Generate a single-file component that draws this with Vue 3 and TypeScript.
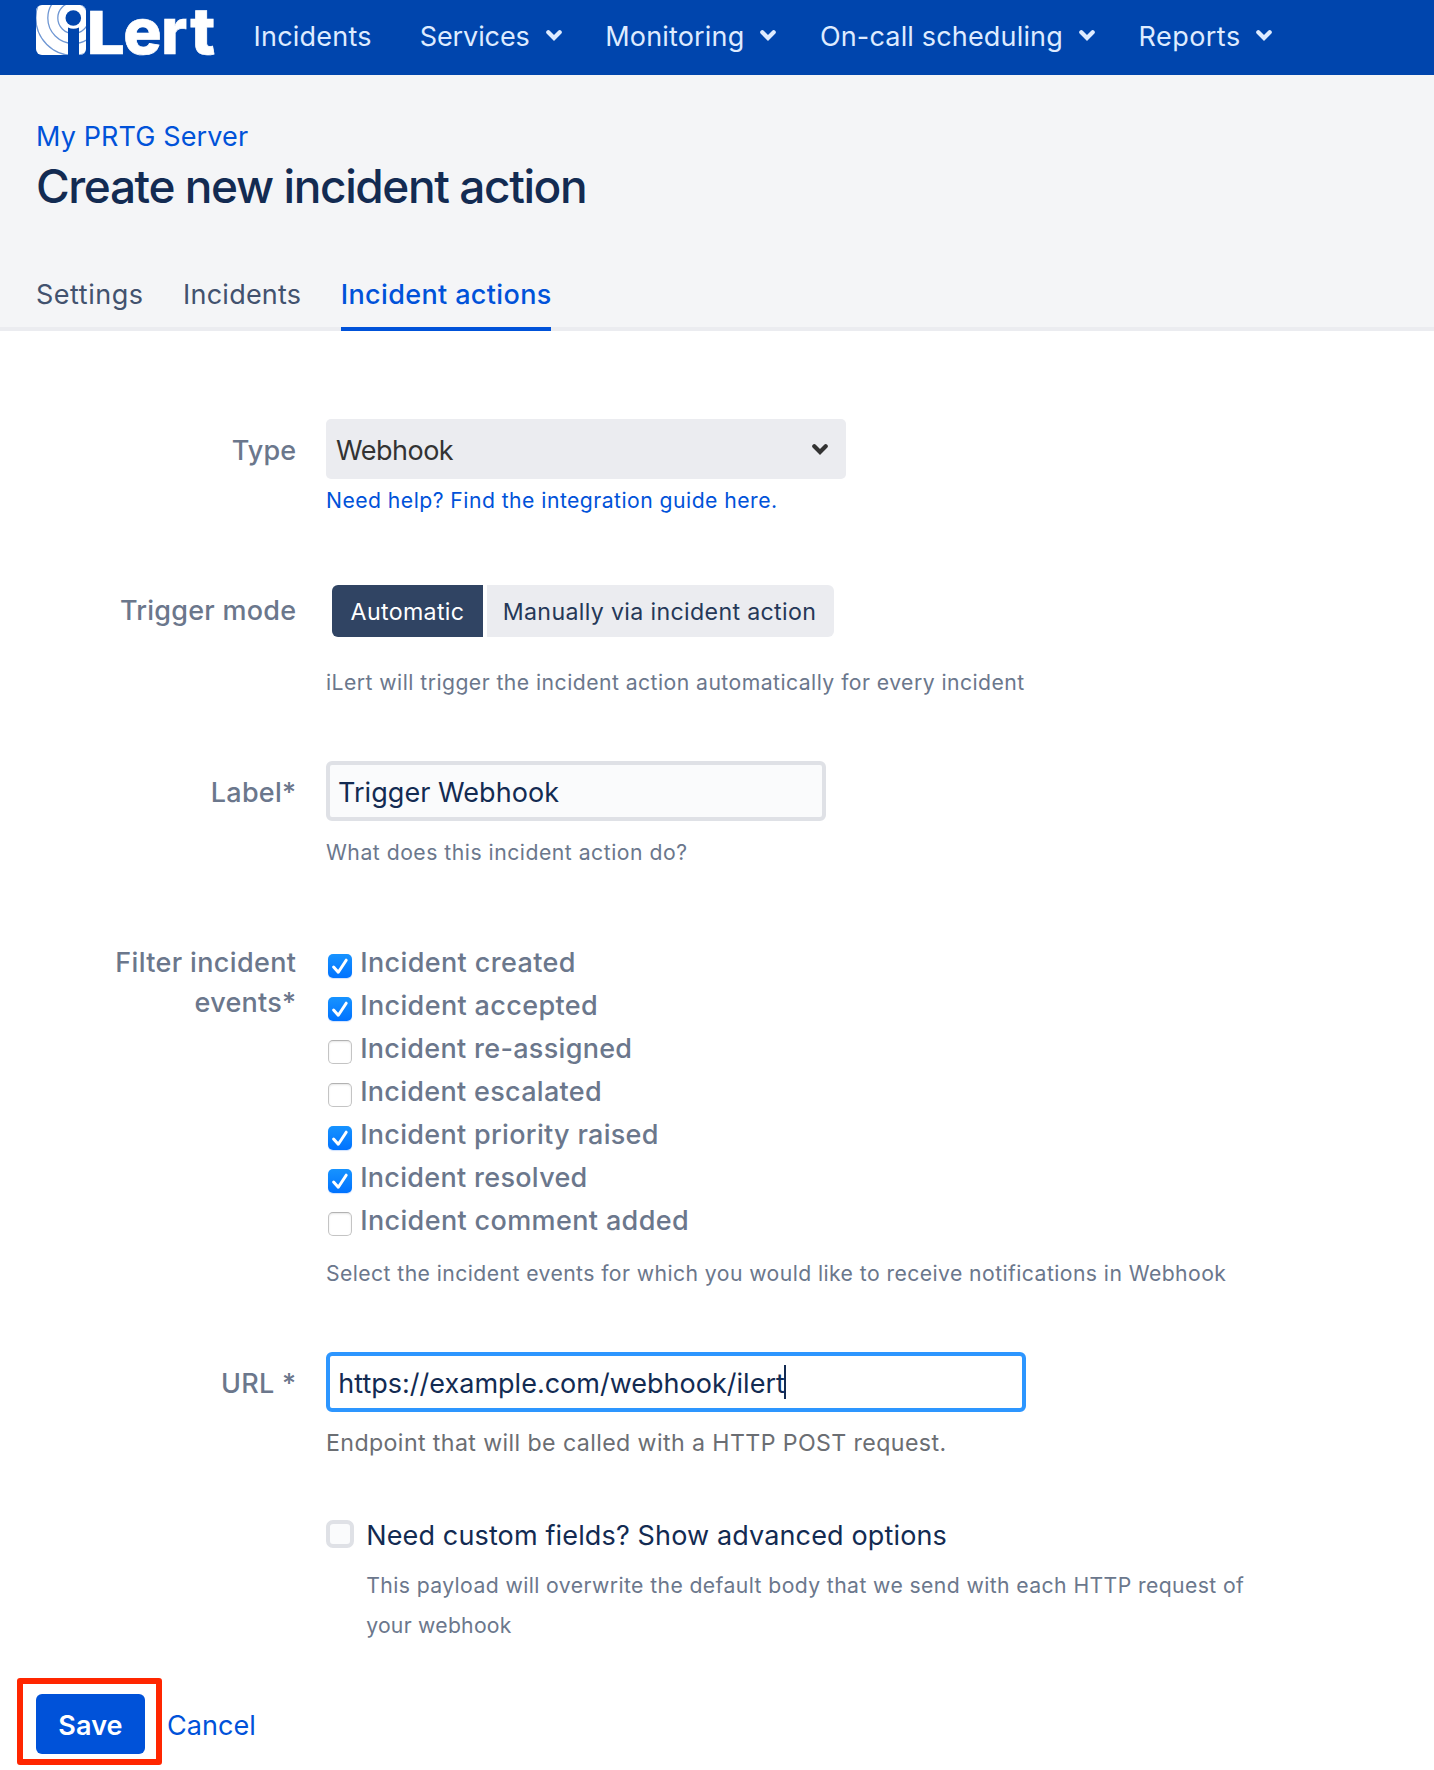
<script setup lang="ts">
import { ref } from 'vue'

interface NavItem { label: string; menu: boolean; cls: string }
interface EventOption { label: string; checked: boolean; cls: string }

const nav: NavItem[] = [
  { label: 'Incidents', menu: false, cls: 'n-incidents' },
  { label: 'Services', menu: true, cls: 'n-services' },
  { label: 'Monitoring', menu: true, cls: 'n-monitoring' },
  { label: 'On-call scheduling', menu: true, cls: 'n-oncall' },
  { label: 'Reports', menu: true, cls: 'n-reports' },
]

const label = ref('Trigger Webhook')
const url = ref('https://example.com/webhook/ilert')
const mode = ref<'auto' | 'manual'>('auto')

const events = ref<EventOption[]>([
  { label: 'Incident created', checked: true, cls: 'e-wide' },
  { label: 'Incident accepted', checked: true, cls: 'e-mid' },
  { label: 'Incident re-assigned', checked: false, cls: '' },
  { label: 'Incident escalated', checked: false, cls: '' },
  { label: 'Incident priority raised', checked: true, cls: '' },
  { label: 'Incident resolved', checked: true, cls: '' },
  { label: 'Incident comment added', checked: false, cls: 'e-mid' },
])
</script>

<template>
  <div class="page">
    <nav class="topbar">
      <svg class="logo" width="180" height="60" viewBox="0 0 180 60" aria-label="iLert">
        <defs>
          <clipPath id="mark"><rect x="0" y="5" width="50" height="50" rx="6" /></clipPath>
        </defs>
        <g clip-path="url(#mark)">
          <rect x="0" y="5" width="50" height="50" fill="#fff" />
          <g fill="none" stroke="#6f97d3" stroke-width="1.3">
            <circle cx="37.3" cy="18" r="15.5" />
            <circle cx="37.3" cy="18" r="25.5" />
            <circle cx="37.3" cy="18" r="37.5" />
          </g>
          <circle cx="37.3" cy="18" r="9.6" fill="#fff" />
          <circle cx="37.3" cy="18" r="7.8" fill="#0045ad" />
          <path d="M32 27.6Q37.500 30 43 27.600V55H32Z" fill="#0045ad" />
        </g>
        <g class="wordmark" fill="#fff" stroke="#fff" stroke-width="0.7">
          <text font-size="59" transform="translate(50.700 54) scale(1.14 1)">L</text>
          <text font-size="64" x="87.3" y="54">e</text>
          <text font-size="64" transform="translate(125.300 54) scale(.96 1)">r</text>
          <text font-size="64" transform="translate(154.300 54) scale(1.020 1)">t</text>
        </g>
      </svg>
      <a v-for="item in nav" :key="item.label" class="nav-item" :class="item.cls">
        <span>{{ item.label }}</span>
        <svg v-if="item.menu" class="chev" width="16" height="11" viewBox="0 0 16 11">
          <path d="M2.300 2.300L8 8L13.700 2.300" />
        </svg>
      </a>
    </nav>

    <header class="head">
      <a class="crumb">My PRTG Server</a>
      <h1>Create new incident action</h1>
      <div class="tabs">
        <a class="tab t-settings">Settings</a>
        <a class="tab t-incidents">Incidents</a>
        <a class="tab active">Incident actions</a>
      </div>
    </header>

    <main class="form">
      <div class="row r-type">
        <div class="name">Type</div>
        <div>
          <div class="select">
            <span>Webhook</span>
            <svg class="chev" width="16" height="11" viewBox="0 0 16 11"><path d="M2.300 2.300L8 8L13.700 2.300" /></svg>
          </div>
          <a class="help">Need help? Find the integration guide here.</a>
        </div>
      </div>

      <div class="row r-mode">
        <div class="name">Trigger mode</div>
        <div>
          <div class="toggle">
            <button class="auto" :class="{ on: mode === 'auto' }" @click="mode = 'auto'">Automatic</button>
            <button class="manual" :class="{ on: mode === 'manual' }" @click="mode = 'manual'">Manually via incident action</button>
          </div>
          <p class="hint">iLert will trigger the incident action automatically for every incident</p>
        </div>
      </div>

      <div class="row r-label">
        <div class="name">Label*</div>
        <div>
          <input v-model="label" class="field" type="text" />
          <p class="hint">What does this incident action do?</p>
        </div>
      </div>

      <div class="row r-events">
        <div class="name"><span class="filter">Filter incident</span> events*</div>
        <div>
          <label v-for="ev in events" :key="ev.label" class="event" :class="ev.cls">
            <span class="box" :class="{ checked: ev.checked }">
              <svg v-if="ev.checked" width="24" height="24" viewBox="0 0 24 24"><path d="M5.600 13L10.300 18.200L18.200 6.200" /></svg>
            </span>
            <span>{{ ev.label }}</span>
          </label>
          <p class="hint">Select the incident events for which you would like to receive notifications in Webhook</p>
        </div>
      </div>

      <div class="row r-url">
        <div class="name">URL *</div>
        <div>
          <div class="field focused"><span>{{ url }}</span><i class="caret"></i></div>
          <p class="hint">Endpoint that will be called with a HTTP POST request.</p>
        </div>
      </div>

      <div class="row r-adv">
        <div></div>
        <div class="advanced">
          <span class="bigbox"></span>
          <div>
            <div class="adv-title">Need custom fields? Show advanced options</div>
            <p class="hint">This payload will overwrite the default body that we send with each HTTP request of <span class="tail">your webhook</span></p>
          </div>
        </div>
      </div>
    </main>

    <footer class="actions">
      <button class="save">Save<span class="marker"></span></button>
      <a class="cancel">Cancel</a>
    </footer>
  </div>
</template>

<style>
body { background: #fff; overflow: hidden; }
</style>

<style scoped>
.page { height: 1770px; overflow: hidden; font-family: Inter, "Liberation Sans", sans-serif; font-size: 27px; line-height: 40px; color: #132b52; background: #fff; }
p, h1 { margin: 0; }
button { font-family: inherit; border: 0; margin: 0; padding: 0; }
.chev path { fill: none; stroke: currentColor; stroke-width: 4.200; stroke-linecap: round; stroke-linejoin: miter; }

.topbar { height: 75px; box-sizing: border-box; padding-left: 36px; background: #0045ad; color: #deebff; display: flex; align-items: flex-start; }
.logo { display: block; margin-right: 37.500px; overflow: visible; }
.wordmark { font-family: Inter, "Liberation Sans", sans-serif; font-weight: 800; }
.nav-item { display: flex; margin: 17px 43.800px 0 0; white-space: nowrap; }
.nav-item .chev { margin: 13px 0 0 15.800px; }
.n-incidents { letter-spacing: 0.217px; margin-right: 48px; }
.n-services { letter-spacing: -0.090px; }
.n-monitoring { letter-spacing: 0.155px; }
.n-oncall { letter-spacing: 0.168px; }
.n-reports { letter-spacing: 0.450px; }

.head { height: 256px; box-sizing: border-box; padding: 42px 0 0; background: #f4f5f7; }
.crumb { display: block; padding-left: 36px; color: #0052d9; letter-spacing: 0.122px; }
h1 { margin-top: 4px; padding-left: 36px; font-size: 46px; line-height: 50px; font-weight: 500; letter-spacing: -1.410px; }
.tabs { display: flex; margin-top: 64px; padding-left: 36px; height: 52px; border-bottom: 4px solid #ebecf0; }
.tab { height: 52px; color: #42526e; margin-right: 39.500px; }
.t-settings { letter-spacing: 0.526px; }
.t-incidents { letter-spacing: 0.217px; }
.active { width: 210px; white-space: nowrap; color: #0052d9; font-weight: 500; letter-spacing: 0.359px; border-bottom: 4px solid #0052d9; }

.row { display: grid; grid-template-columns: 296.300px 1fr; column-gap: 29.700px; }
.name { text-align: right; font-weight: 500; color: #6b778c; letter-spacing: 0.240px; }
.filter { letter-spacing: 0.350px; display: block; }
.hint { font-size: 21.200px; color: #6b778c; letter-spacing: 0.447px; }
.help { display: block; margin-top: 1px; font-size: 21.200px; color: #0052d9; letter-spacing: 0.455px; }

.r-type { margin-top: 88px; }
.r-type .name { padding-top: 12px; letter-spacing: 0.150px; }
.select { width: 520px; height: 60px; box-sizing: border-box; border-radius: 5px; background: #ebecf0; color: #333; display: flex; justify-content: space-between; align-items: center; padding: 4px 18px 0 10px; letter-spacing: -0.500px; }
.select .chev { margin-top: -4px; }

.r-mode { margin-top: 65px; }
.r-mode .name { padding-top: 6px; }
.toggle { display: flex; gap: 4px; padding-left: 6px; height: 52px; }
.toggle button { font-size: 23.200px; line-height: 54px; height: 52px; background: #ebecf0; color: #253858; white-space: nowrap; }
.toggle .auto { width: 151px; letter-spacing: 0.330px; border-radius: 6px 0 0 6px; }
.toggle .manual { width: 347px; letter-spacing: 0.330px; border-radius: 0 6px 6px 0; padding-right: 2px; }
.toggle .on { background: #304463; color: #fff; }
.r-mode .hint { margin-top: 25px; }

.r-label { margin-top: 59px; }
.r-label .name { padding-top: 12px; }
.field { display: flex; align-items: center; width: 500px; height: 60px; box-sizing: border-box; border: 4px solid #dfe1e6; border-radius: 6px; background: #fafbfc; padding: 2px 8px 0; font-family: inherit; font-size: 27px; line-height: 40px; color: #132b52; outline: none; }
.r-label .field { letter-spacing: 0.050px; }
.r-label .hint { margin-top: 11px; letter-spacing: 0.500px; }

.r-events { margin-top: 71px; }
.event { display: flex; height: 43px; padding-left: 2px; gap: 8.200px; color: #6b778c; font-weight: 500; letter-spacing: 0.300px; }
.e-wide { letter-spacing: 0.380px; }
.e-mid { letter-spacing: 0.365px; }
.box { flex: none; width: 24px; height: 24px; margin-top: 11px; box-sizing: border-box; border-radius: 5px; border: 1px solid #c4c4c4; border-top-color: #b2b2b2; background: #fff; box-shadow: inset 0 1px 2px rgba(0, 0, 0, 0.100); }
.box.checked { border: 0; background: linear-gradient(#1793ff, #0072ff); box-shadow: 0 1px 1px rgba(0, 100, 255, 0.200); }
.box svg { display: block; }
.box path { fill: none; stroke: #fff; stroke-width: 3; stroke-linecap: round; stroke-linejoin: round; }
.r-events .hint { margin-top: 9px; letter-spacing: 0.417px; }

.r-url { margin-top: 59px; }
.r-url .name { padding-top: 12px; }
.focused { width: 700px; border-color: #2d96ff; background: #fff; padding: 4px 8px 0 8.300px; letter-spacing: 0.008px; }
.caret { width: 2px; height: 34px; background: #132b52; margin: -4px 0 0 -1px; }
.r-url .hint { margin-top: 10.600px; font-size: 23.200px; letter-spacing: 0.390px; color: #6b6e73; }

.r-adv { margin-top: 53.400px; }
.advanced { display: flex; }
.bigbox { flex: none; width: 28px; height: 28px; box-sizing: border-box; margin: 4px 12.200px 0 0; border: 4px solid #dfe1e6; border-radius: 7px; background: #fafbfc; }
.adv-title { letter-spacing: 0.140px; }
.advanced .hint { margin-top: 9px; width: 900px; letter-spacing: 0.395px; }
.advanced .tail { letter-spacing: 0.250px; }

.actions { display: flex; margin: 49px 0 0 36px; }
.save { position: relative; width: 109px; height: 60px; border-radius: 6px; background: #0052d9; color: #fff; font-size: 27px; font-weight: 600; line-height: 64px; letter-spacing: 0.113px; }
.marker { position: absolute; left: -19px; top: -16px; width: 144.500px; height: 87px; box-sizing: border-box; border: 6px solid #ff2600; border-radius: 3px; }
.cancel { margin: 12px 0 0 22px; color: #0052d9; letter-spacing: 0.040px; }
</style>
